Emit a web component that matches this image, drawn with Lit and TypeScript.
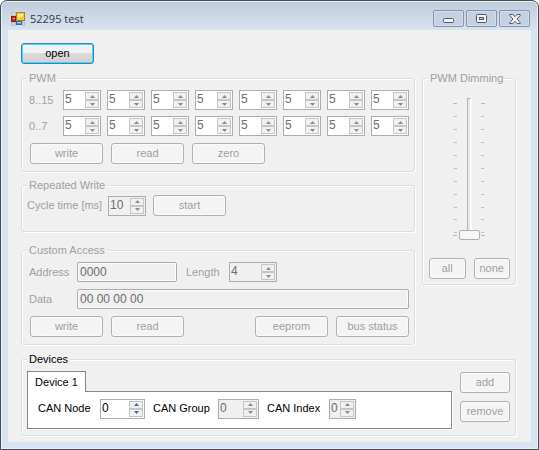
import { LitElement, html, svg, css, nothing } from "lit";
import { customElement } from "lit/decorators.js";

interface SpinOptions {
  id: string;
  value: number;
  size?: string;
  enabled?: boolean;
  grey?: boolean;
  label?: string;
}

@customElement("app-root")
export class AppRoot extends LitElement {
  static styles = css`
    :host {
      display: block;
      font: 11px/15px "Liberation Sans", Arial, sans-serif;
      color: #000;
    }
    * {
      box-sizing: border-box;
    }
    button,
    input {
      font: inherit;
      color: inherit;
      margin: 0;
    }
    .window {
      display: flex;
      flex-direction: column;
      min-height: 100vh;
      padding: 0 6px 6px;
      border: 1px solid #4b4b4d;
      border-radius: 7px 7px 0 0;
      box-shadow: inset 0 0 0 1px #eaf1f8;
      background: linear-gradient(#becbda, #d8e4f1 30px);
    }
    .titlebar {
      display: flex;
      align-items: center;
      height: 29px;
      padding: 6px 2px 0 4px;
      gap: 5px;
    }
    .title {
      flex: 1;
      margin: 0;
      font: 11px/16px "Open Sans", "Noto Sans", sans-serif;
      color: #33394a;
    }
    .caption-buttons {
      display: flex;
      gap: 2px;
    }
    .caption {
      display: grid;
      place-items: center;
      width: 31px;
      height: 17px;
      padding: 0;
      border: 1px solid #8793af;
      border-radius: 2px;
      background: #c3d1e1;
      box-shadow: inset 0 0 0 1px #d2deeb;
    }
    .client {
      flex: 1;
      display: grid;
      grid-template-columns: 1fr 94px;
      align-content: start;
      align-items: start;
      gap: 7px;
      margin: 0 1px 1px;
      padding: 13px 15px 6px 13px;
      background: #f0f0f0;
    }
    .wide {
      grid-column: 1 / -1;
    }
    .stack {
      display: flex;
      flex-direction: column;
    }
    fieldset {
      min-width: 0;
      margin: 0;
      padding: 0 5px 7px;
      border: 1px solid #d5dfe8;
      border-radius: 3px;
      box-shadow: 1px 1px 0 #fff, inset 1px 1px 0 #fff;
    }
    legend {
      padding: 0 2px;
      background: #f0f0f0;
    }
    .off {
      color: #a0a0a0;
    }
    .row {
      display: flex;
      align-items: center;
    }
    .pwm {
      display: grid;
      grid-template-columns: 28px repeat(8, 1fr);
      align-items: center;
      row-gap: 6px;
      padding: 4px 0 7px 2px;
    }
    .pwm .spin {
      justify-self: end;
    }
    .buttons {
      gap: 8px;
      padding-left: 3px;
    }
    .push {
      width: 73px;
      height: 21px;
      padding: 0;
      border: 1px solid #adb2b5;
      border-radius: 3px;
      background: #f4f4f4;
      box-shadow: inset 0 0 0 1px #f9f9f9;
      color: #a0a0a0;
      text-align: center;
    }
    .push.open {
      border-color: #3c7fb1;
      background: linear-gradient(#f2f2f2 50%, #dcdcdc 50%, #cfcfcf);
      box-shadow: inset 0 0 0 1px #41d6fb;
      color: #000;
    }
    .push.half {
      flex: 1;
      width: auto;
    }
    .push.side {
      width: 50px;
    }
    .spacer {
      flex: 1;
    }
    .repeated {
      margin: 6px 0 11px;
      padding-bottom: 15px;
    }
    .repeated .row {
      padding-top: 2px;
    }
    .repeated label {
      width: 81px;
    }
    .repeated .push {
      margin-left: 7px;
    }
    .field {
      padding: 4px 0 3px 2px;
    }
    .field label {
      width: 48px;
    }
    .field label.length {
      width: 43px;
      margin-left: 9px;
    }
    .field + .buttons {
      padding-top: 4px;
    }
    .text {
      height: 20px;
      min-width: 0;
      padding: 0 2px;
      border: 1px solid #abadb3;
      border-radius: 2px;
      background: #f0f0f0;
      box-shadow: inset 0 0 0 1px #fbfbfb;
      color: #6d6d6d;
      font-size: 12px;
    }
    .text.address {
      width: 100px;
    }
    .text.data {
      flex: 1;
    }
    .spin {
      display: flex;
      width: 38px;
      height: 20px;
      padding-right: 1px;
      border: 1px solid #abadb3;
      background: #fff;
      color: #6d6d6d;
    }
    .spin.w48 {
      width: 48px;
    }
    .spin.w45 {
      width: 45px;
    }
    .spin.w41 {
      width: 41px;
    }
    .spin.w27 {
      width: 27px;
    }
    .spin.grey {
      background: #f0f0f0;
    }
    .spin.enabled {
      color: #000;
    }
    .spin input {
      flex: 1;
      width: 0;
      min-width: 0;
      padding: 0 0 1px 1px;
      border: 0;
      background: none;
      font-size: 12px;
      appearance: textfield;
    }
    .spin input::-webkit-inner-spin-button {
      appearance: none;
      margin: 0;
    }
    .arrows {
      display: flex;
      flex-direction: column;
      width: 14px;
      padding: 1px 0;
    }
    .step {
      flex: 1;
      display: grid;
      place-items: center;
      padding: 0;
      border: 1px solid #c6c6c6;
      background: #f0f0f0;
      color: #8c8c8c;
    }
    .enabled .step {
      color: #4a62a8;
    }
    .step svg {
      display: block;
    }
    .dimming {
      padding-bottom: 5px;
    }
    .dimming .buttons {
      padding-left: 1px;
    }
    .track {
      display: flex;
      justify-content: center;
      gap: 1px;
      padding: 12px 0 18px;
    }
    .slider {
      writing-mode: vertical-lr;
      direction: rtl;
      appearance: none;
      width: 21px;
      height: 142px;
      background: none;
    }
    .slider::-webkit-slider-runnable-track {
      width: 4px;
      height: 142px;
      border: 1px solid #b0b4b4;
      border-right-color: #fff;
      border-bottom: 0;
      background: #e7eaea;
      box-shadow: 1px 0 0 #fcfcfc;
    }
    .slider::-webkit-slider-thumb {
      appearance: none;
      width: 21px;
      height: 10px;
      margin-left: -9px;
      border: 1px solid #adb2b5;
      border-radius: 2px;
      background: #f6f6f6;
    }
    .devices {
      display: flex;
      gap: 8px;
      padding-top: 4px;
    }
    fieldset.group-devices {
      padding-bottom: 6px;
    }
    .tabs {
      flex: 1;
      min-width: 0;
    }
    .tab {
      display: block;
      width: 59px;
      height: 21px;
      margin-bottom: -1px;
      padding: 0;
      position: relative;
      border: 1px solid #828790;
      border-bottom: 0;
      background: #fff;
    }
    .panel {
      height: 38px;
      padding: 0 0 3px 10px;
      border: 1px solid #828790;
      background: #fff;
      box-shadow: 1px 1px 0 #fff;
    }
    .panel label {
      width: 62px;
    }
    .panel label.group {
      width: 65px;
      margin-left: 8px;
    }
    .panel label.index {
      margin-left: 8px;
    }
    .side-buttons {
      display: flex;
      flex-direction: column;
      gap: 8px;
      padding-top: 1px;
    }
  `;

  private arrow(up: boolean) {
    return html`<svg width="5" height="3" viewBox="0 0 5 3" aria-hidden="true">
      <path d=${up ? "M2.5 0 5 3H0z" : "M0 0h5L2.5 3z"} fill="currentColor" />
    </svg>`;
  }

  private spin({ id, value, size = "", enabled = false, grey = false, label }: SpinOptions) {
    return html`<span class="spin ${size} ${enabled ? "enabled" : ""} ${grey ? "grey" : ""}">
      <input id=${id} type="number" .value=${String(value)} aria-label=${label ?? nothing} ?disabled=${!enabled} />
      <span class="arrows">
        <button class="step" aria-label="Increase" ?disabled=${!enabled}>${this.arrow(true)}</button>
        <button class="step" aria-label="Decrease" ?disabled=${!enabled}>${this.arrow(false)}</button>
      </span>
    </span>`;
  }

  private pwmRow(text: string, first: number) {
    return html`<span>${text}</span>${Array.from({ length: 8 }, (_, i) =>
        this.spin({ id: `pwm${first + i}`, value: 5, label: `Channel ${first + i}` })
      )}`;
  }

  private ticks(left: boolean) {
    const rows = [5, 18, 31, 44, 57, 70, 83, 96, 109, 121, 134, 137];
    const box = left ? 5 : 6;
    return html`<svg width=${box} height="142" aria-hidden="true">
      ${rows.map((y, i) => {
        const long = i === 0 || i === rows.length - 1;
        const width = long ? 4 : 3;
        return svg`<rect x=${left ? 5 - width : 1} y=${y} width=${width} height="1" fill="#bdbdbd" />`;
      })}
    </svg>`;
  }

  render() {
    return html`
      <main class="window">
        <header class="titlebar">
          <svg width="14" height="14" viewBox="0 0 14 14" aria-hidden="true">
            <path d="M.5 .5h4v3h-4zM.5 10.5h4v3h-4zM11.5 9.5h2v4h-2z" fill="#d3dae2" stroke="#b6bdc5" />
            <rect x="5.5" y=".5" width="8" height="8" fill="#f8c832" stroke="#b08419" />
            <path d="M7 2h5v2l-5 2z" fill="#fdeb9a" />
            <rect x=".5" y="4.5" width="4" height="5" fill="#c4281c" stroke="#8e1a12" />
            <path d="M2 6h2v1h-2z" fill="#f0a090" />
            <rect x="5.5" y="9.5" width="5" height="3" fill="#5b93ea" stroke="#3563b4" />
            <path d="M6 10h4v1h-4z" fill="#a5c8fa" />
          </svg>
          <h1 class="title">52295 test</h1>
          <div class="caption-buttons">
            <button class="caption" aria-label="Minimize">
              <svg width="11" height="11" viewBox="0 0 11 11">
                <rect x=".5" y="5.5" width="10" height="4" rx="1" fill="#f4f4f4" stroke="#535666" />
              </svg>
            </button>
            <button class="caption" aria-label="Maximize">
              <svg width="11" height="9" viewBox="0 0 11 9">
                <rect x=".5" y=".5" width="10" height="8" rx="1" fill="#f4f4f4" stroke="#535666" />
                <rect x="3.5" y="3.5" width="4" height="2" fill="#b9c8da" stroke="#535666" />
              </svg>
            </button>
            <button class="caption" aria-label="Close">
              <svg width="12" height="10" viewBox="0 0 12 10">
                <path
                  d="M.8 .5h3L6 2.7 8.2 .5h3v1L8 5l3.2 3.5v1h-3L6 7.3 3.8 9.5h-3v-1L4 5 .8 1.5z"
                  fill="#f4f4f4"
                  stroke="#535666"
                />
              </svg>
            </button>
          </div>
        </header>

        <section class="client">
          <div class="wide row"><button class="push open">open</button></div>

          <div class="stack">
            <fieldset class="off">
              <legend>PWM</legend>
              <div class="pwm">${this.pwmRow("8..15", 8)}${this.pwmRow("0..7", 0)}</div>
              <div class="row buttons">
                <button class="push" disabled>write</button>
                <button class="push" disabled>read</button>
                <button class="push" disabled>zero</button>
              </div>
            </fieldset>

            <fieldset class="off repeated">
              <legend>Repeated Write</legend>
              <div class="row">
                <label for="cycle">Cycle time [ms]</label>
                ${this.spin({ id: "cycle", value: 10, grey: true })}
                <button class="push" disabled>start</button>
              </div>
            </fieldset>

            <fieldset class="off">
              <legend>Custom Access</legend>
              <div class="row field">
                <label for="address">Address</label>
                <input class="text address" id="address" type="text" value="0000" disabled />
                <label class="length" for="length">Length</label>
                ${this.spin({ id: "length", value: 4, size: "w48", grey: true })}
              </div>
              <div class="row field">
                <label for="data">Data</label>
                <input class="text data" id="data" type="text" value="00 00 00 00" disabled />
              </div>
              <div class="row buttons">
                <button class="push" disabled>write</button>
                <button class="push" disabled>read</button>
                <span class="spacer"></span>
                <button class="push" disabled>eeprom</button>
                <button class="push" disabled>bus status</button>
              </div>
            </fieldset>
          </div>

          <fieldset class="off dimming">
            <legend>PWM Dimming</legend>
            <div class="track">
              ${this.ticks(true)}
              <input class="slider" type="range" min="0" max="100" value="0" aria-label="PWM Dimming" disabled />
              ${this.ticks(false)}
            </div>
            <div class="row buttons">
              <button class="push half" disabled>all</button>
              <button class="push half" disabled>none</button>
            </div>
          </fieldset>

          <fieldset class="wide group-devices">
            <legend>Devices</legend>
            <div class="devices">
              <div class="tabs">
                <button class="tab" role="tab" aria-selected="true">Device 1</button>
                <div class="panel row">
                  <label for="node">CAN Node</label>
                  ${this.spin({ id: "node", value: 0, size: "w45", enabled: true })}
                  <label class="group" for="group">CAN Group</label>
                  ${this.spin({ id: "group", value: 0, size: "w41", grey: true })}
                  <label class="index" for="index">CAN Index</label>
                  ${this.spin({ id: "index", value: 0, size: "w27", grey: true })}
                </div>
              </div>
              <div class="side-buttons">
                <button class="push side" disabled>add</button>
                <button class="push side" disabled>remove</button>
              </div>
            </div>
          </fieldset>
        </section>
      </main>
    `;
  }
}
